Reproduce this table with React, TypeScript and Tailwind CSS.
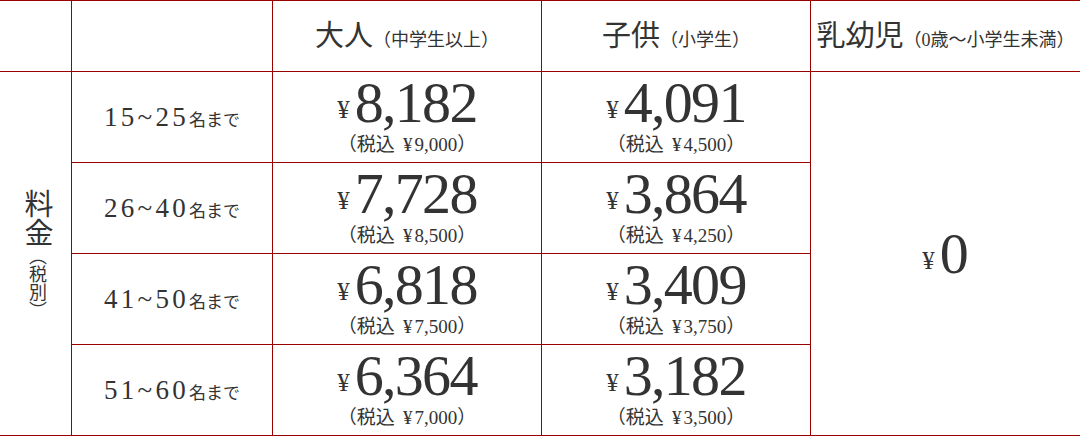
const SERIF = "font-['Liberation_Serif','Noto_Sans_CJK_JP',serif]"

const rows = [
  { label: '15~25', adult: '8,182', adultTax: '9,000', child: '4,091', childTax: '4,500' },
  { label: '26~40', adult: '7,728', adultTax: '8,500', child: '3,864', childTax: '4,250' },
  { label: '41~50', adult: '6,818', adultTax: '7,500', child: '3,409', childTax: '3,750' },
  { label: '51~60', adult: '6,364', adultTax: '7,000', child: '3,182', childTax: '3,500' },
]

function Price({ value, tax }: { value: string; tax?: string }) {
  return (
    <div className="flex flex-col items-center justify-center bg-white pb-[7px]">
      <div className="leading-none whitespace-nowrap">
        <span className="text-[25px] align-[4px] mr-[5px]">¥</span>
        <span className="text-[58px] tracking-[-0.03em]">{value}</span>
      </div>
      {tax && (
        <div className="mt-[3px] text-[19px] leading-none whitespace-nowrap">
          （税込<span className="ml-[8px] mr-[2px]">¥</span>{tax}）
        </div>
      )}
    </div>
  )
}

function Header({ main, sub }: { main: string; sub: string }) {
  return (
    <div className="flex items-center justify-center bg-white">
      <p className="whitespace-nowrap leading-none">
        <span className="text-[29px]">{main}</span>
        <span className="text-[18px]">{sub}</span>
      </p>
    </div>
  )
}

export default function App() {
  return (
    <div className={`w-[1080px] h-[436px] bg-white text-[#333] ${SERIF}`}>
      <div className="grid grid-cols-[71px_200px_268px_268px_269px] grid-rows-[70px_90px_90px_90px_90px] gap-px bg-[#990000] py-px">
        {/* header row */}
        <div className="bg-white" />
        <div className="bg-white" />
        <Header main="大人" sub="（中学生以上）" />
        <Header main="子供" sub="（小学生）" />
        <Header main="乳幼児" sub="（0歳～小学生未満）" />

        {/* left label */}
        <div className="row-span-4 col-start-1 row-start-2 flex items-center justify-center bg-white">
          <p className="[writing-mode:vertical-rl] leading-none">
            <span className="text-[29px]">料金</span>
            <span className="text-[18px]">（税別）</span>
          </p>
        </div>

        {rows.map((r, i) => (
          <div key={r.label} className="contents">
            <div
              className="col-start-2 flex items-center justify-center bg-white"
              style={{ gridRowStart: i + 2 }}
            >
              <p className="whitespace-nowrap leading-none">
                <span className="text-[27px] tracking-[0.12em]">{r.label}</span>
                <span className="text-[17px]">名まで</span>
              </p>
            </div>
            <div className="col-start-3" style={{ gridRowStart: i + 2, display: 'grid' }}>
              <Price value={r.adult} tax={r.adultTax} />
            </div>
            <div className="col-start-4" style={{ gridRowStart: i + 2, display: 'grid' }}>
              <Price value={r.child} tax={r.childTax} />
            </div>
          </div>
        ))}

        {/* infant merged */}
        <div className="row-span-4 col-start-5 row-start-2 grid">
          <div className="flex items-center justify-center bg-white">
            <div className="leading-none whitespace-nowrap">
              <span className="text-[25px] align-[4px] mr-[5px]">¥</span>
              <span className="text-[58px]">0</span>
            </div>
          </div>
        </div>
      </div>
    </div>
  )
}
